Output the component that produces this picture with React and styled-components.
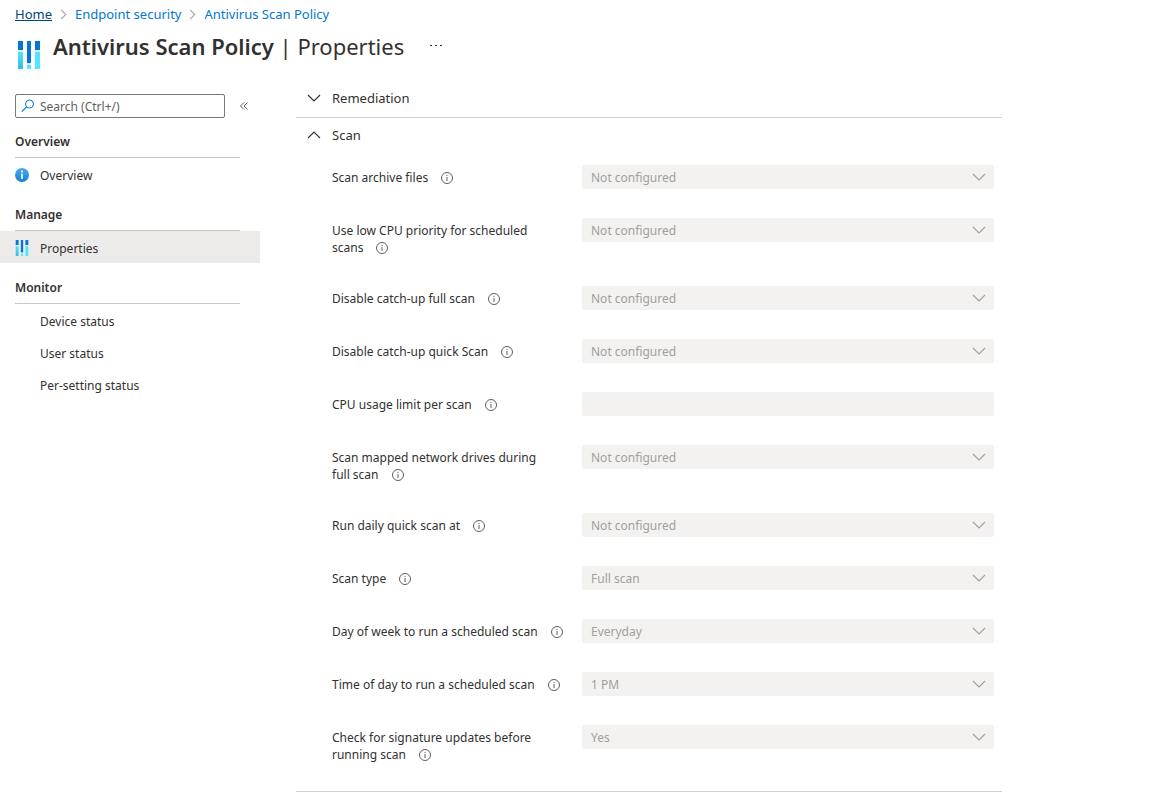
import React, { useState } from "react";
import styled, { createGlobalStyle, css } from "styled-components";

const NOT_CONFIGURED = "Not configured";

const scanSettings = [
  { id: "archive-files", label: "Scan archive files", value: NOT_CONFIGURED },
  {
    id: "low-cpu",
    label: "Use low CPU priority for scheduled scans",
    value: NOT_CONFIGURED,
  },
  {
    id: "catchup-full",
    label: "Disable catch-up full scan",
    value: NOT_CONFIGURED,
  },
  {
    id: "catchup-quick",
    label: "Disable catch-up quick Scan",
    value: NOT_CONFIGURED,
  },
  { id: "cpu-limit", label: "CPU usage limit per scan", type: "text" },
  {
    id: "mapped-drives",
    label: "Scan mapped network drives during full scan",
    value: NOT_CONFIGURED,
  },
  { id: "daily-quick", label: "Run daily quick scan at", value: NOT_CONFIGURED },
  { id: "scan-type", label: "Scan type", value: "Full scan" },
  {
    id: "scan-day",
    label: "Day of week to run a scheduled scan",
    value: "Everyday",
  },
  {
    id: "scan-time",
    label: "Time of day to run a scheduled scan",
    value: "1 PM",
  },
  {
    id: "signature-updates",
    label: "Check for signature updates before running scan",
    value: "Yes",
  },
];

const menu = [
  { title: "Overview", items: [{ name: "Overview", icon: "info" }] },
  {
    title: "Manage",
    items: [{ name: "Properties", icon: "bars", active: true }],
  },
  {
    title: "Monitor",
    items: [
      { name: "Device status" },
      { name: "User status" },
      { name: "Per-setting status" },
    ],
  },
];

const Chevron = ({ up, size = 14 }) => (
  <svg width={size} height={size} viewBox="0 0 14 14" fill="none">
    <path
      d={up ? "M1 10L7 4L13 10" : "M1 4L7 10L13 4"}
      stroke="currentColor"
      strokeWidth="1.1"
    />
  </svg>
);

const BarsIcon = ({ width, height }) => (
  <svg width={width} height={height} viewBox="0 0 24 28">
    <defs>
      <linearGradient id="bars-cyan" x1="0" y1="1" x2="0" y2="0">
        <stop offset="0" stopColor="#32bedd" />
        <stop offset="1" stopColor="#50e6ff" />
      </linearGradient>
    </defs>
    <rect x="1" y="0" width="5" height="9" fill="#0078d4" />
    <rect x="1" y="9" width="5" height="2" fill="#d9eef8" />
    <rect x="1" y="11" width="5" height="17" fill="url(#bars-cyan)" />
    <rect x="10" y="0" width="4" height="22" fill="#0078d4" />
    <rect x="10" y="22" width="4" height="2" fill="#d9eef8" />
    <rect x="10" y="24" width="4" height="4" fill="#50e6ff" />
    <rect x="18" y="0" width="5" height="9" fill="#0078d4" />
    <rect x="18" y="9" width="5" height="2" fill="#d9eef8" />
    <rect x="18" y="11" width="5" height="17" fill="#50e6ff" />
  </svg>
);

const OverviewIcon = () => (
  <svg width="14" height="14" viewBox="0 0 14 14">
    <defs>
      <linearGradient id="info-blue" x1="0" y1="1" x2="0" y2="0">
        <stop offset="0" stopColor="#0f82d8" />
        <stop offset="1" stopColor="#4fa8ec" />
      </linearGradient>
    </defs>
    <circle cx="7" cy="7" r="7" fill="url(#info-blue)" />
    <circle cx="7" cy="3.6" r="1" fill="#fff" />
    <rect x="6.2" y="5.5" width="1.6" height="5.5" fill="#fff" />
  </svg>
);

const SearchIcon = () => (
  <svg width="14" height="14" viewBox="0 0 14 14" fill="none">
    <circle cx="8.5" cy="5" r="4" stroke="#0078d4" />
    <path d="M5.6 7.9L0.8 12.7" stroke="#0078d4" strokeWidth="1.2" />
  </svg>
);

const InfoIcon = () => (
  <svg width="12" height="12" viewBox="0 0 12 12" fill="none">
    <circle cx="6" cy="6" r="5.5" stroke="#605e5c" />
    <rect x="5.5" y="3" width="1" height="1" fill="#605e5c" />
    <rect x="5.5" y="5" width="1" height="4" fill="#605e5c" />
  </svg>
);

const Setting = ({ id, label, value, type }) => (
  <SettingRow>
    <LabelCell>
      <label htmlFor={id}>{label}</label>
      <InfoButton type="button" aria-label={`About ${label}`}>
        <InfoIcon />
      </InfoButton>
    </LabelCell>
    {type === "text" ? (
      <TextInput id={id} type="text" disabled />
    ) : (
      <SelectWrapper>
        <Select id={id} defaultValue={value} disabled>
          <option>{value}</option>
        </Select>
        <Chevron />
      </SelectWrapper>
    )}
  </SettingRow>
);

const App = () => {
  const [open, setOpen] = useState({ remediation: false, scan: true });

  const toggle = (name) => setOpen({ ...open, [name]: !open[name] });

  return (
    <>
      <GlobalStyle />
      <Header>
        <Breadcrumb aria-label="Breadcrumb">
          <HomeLink href="#home">Home</HomeLink>
          <Separator />
          <CrumbLink href="#endpoint-security">Endpoint security</CrumbLink>
          <Separator />
          <CrumbLink href="#policy">Antivirus Scan Policy</CrumbLink>
        </Breadcrumb>
        <TitleRow>
          <BarsIcon width={24} height={28} />
          <Title>
            <strong>Antivirus Scan Policy</strong> | Properties
          </Title>
          <MoreButton type="button" aria-label="More actions">
            <svg width="12" height="4" viewBox="0 0 12 4" fill="#323130">
              <rect x="0" y="1" width="2" height="1" />
              <rect x="5" y="1" width="2" height="1" />
              <rect x="10" y="1" width="2" height="1" />
            </svg>
          </MoreButton>
        </TitleRow>
      </Header>

      <Body>
        <Sidebar>
          <SearchRow>
            <SearchBox>
              <SearchIcon />
              <SearchInput
                type="text"
                placeholder="Search (Ctrl+/)"
                aria-label="Search"
              />
            </SearchBox>
            <CollapseButton type="button" aria-label="Collapse menu">
              <svg width="8" height="8" viewBox="0 0 8 8" fill="none">
                <path
                  d="M4 0.5L0.5 4L4 7.5M7.5 0.5L4 4L7.5 7.5"
                  stroke="#605e5c"
                />
              </svg>
            </CollapseButton>
          </SearchRow>
          {menu.map(({ title, items }) => (
            <MenuSection key={title}>
              <MenuTitle>{title}</MenuTitle>
              {items.map(({ name, icon, active }) => (
                <MenuLink key={name} href={`#${name}`} $active={active}>
                  <MenuIcon>
                    {icon === "info" && <OverviewIcon />}
                    {icon === "bars" && <BarsIcon width={14} height={16} />}
                  </MenuIcon>
                  {name}
                </MenuLink>
              ))}
            </MenuSection>
          ))}
        </Sidebar>

        <Main>
          <Section>
            <SectionButton
              type="button"
              aria-expanded={open.remediation}
              onClick={() => toggle("remediation")}
            >
              <Chevron up={open.remediation} />
              Remediation
            </SectionButton>
          </Section>
          <Section>
            <SectionButton
              type="button"
              aria-expanded={open.scan}
              onClick={() => toggle("scan")}
            >
              <Chevron up={open.scan} />
              Scan
            </SectionButton>
            {open.scan && (
              <Settings>
                {scanSettings.map((setting) => (
                  <Setting key={setting.id} {...setting} />
                ))}
              </Settings>
            )}
          </Section>
        </Main>
      </Body>
    </>
  );
};

export default App;

const GlobalStyle = createGlobalStyle`
  * {
    box-sizing: border-box;
  }

  body {
    margin: 0;
    background: #fff;
    color: #323130;
    font-family: "Segoe UI", "Noto Sans", sans-serif;
    font-size: 12px;
    line-height: 17px;
  }

  button,
  input,
  select {
    font: inherit;
    color: inherit;
  }

  svg {
    flex-shrink: 0;
  }
`;

const plainButton = css`
  display: flex;
  align-items: center;
  padding: 0;
  border: none;
  background: none;
  cursor: pointer;
`;

const Header = styled.header`
  padding: 4px 15px 0;
`;

const Breadcrumb = styled.nav`
  display: flex;
  align-items: center;
  height: 20px;
  font-size: 13px;
`;

const CrumbLink = styled.a`
  color: #0078d4;
  text-decoration: none;
`;

const HomeLink = styled(CrumbLink)`
  color: #004578;
  text-decoration: underline;
`;

const Separator = styled.span`
  width: 7px;
  height: 7px;
  margin: 0 10px 0 6px;
  border: solid #a19f9d;
  border-width: 1px 1px 0 0;
  transform: rotate(45deg);
`;

const TitleRow = styled.div`
  display: flex;
  align-items: center;
  height: 44px;
  padding: 0 2px;

  & > svg {
    margin-top: 18px;
  }
`;

const Title = styled.h1`
  margin: 0 26px 0 12px;
  font-size: 22px;
  font-weight: 400;
  line-height: 32px;

  strong {
    font-weight: 600;
  }
`;

const MoreButton = styled.button`
  ${plainButton}
`;

const Body = styled.div`
  display: flex;
  align-items: flex-start;
  gap: 36px;
  padding-top: 12px;
`;

const Sidebar = styled.aside`
  flex: 0 0 260px;
  padding-top: 14px;
`;

const SearchRow = styled.div`
  display: flex;
  align-items: center;
  gap: 15px;
  padding: 0 12px 0 15px;
`;

const SearchBox = styled.div`
  display: flex;
  align-items: center;
  gap: 5px;
  width: 210px;
  height: 24px;
  padding: 0 5px;
  border: 1px solid #7a7876;
  border-radius: 2px;
`;

const SearchInput = styled.input`
  flex: 1;
  min-width: 0;
  padding: 0;
  border: none;
  outline: none;
  background: none;

  &::placeholder {
    color: #605e5c;
    opacity: 1;
  }
`;

const CollapseButton = styled.button`
  ${plainButton}
`;

const MenuSection = styled.div`
  padding-bottom: 1px;
`;

const MenuTitle = styled.h2`
  height: 40px;
  margin: 0 20px 0 15px;
  padding-top: 15px;
  border-bottom: 1px solid #c8c6c4;
  font-size: 12px;
  font-weight: 600;
`;

const MenuLink = styled.a`
  display: flex;
  align-items: center;
  gap: 11px;
  height: 32px;
  padding: 2px 15px 0;
  background: ${({ $active }) => ($active ? "#edebe9" : "transparent")};
  color: inherit;
  text-decoration: none;
`;

const MenuIcon = styled.span`
  display: flex;
  justify-content: center;
  width: 14px;
`;

const Main = styled.main`
  flex: 1;
  max-width: 706px;
  padding-top: 1px;
`;

const Section = styled.section`
  border-bottom: 1px solid #d2d0ce;
`;

const SectionButton = styled.button`
  ${plainButton}
  gap: 11px;
  width: 100%;
  height: 36px;
  padding: 0 11px 2px;
  font-size: 13px;
  text-align: left;
`;

const Settings = styled.div`
  display: flex;
  flex-direction: column;
  gap: 29px;
  padding: 11px 8px 27px 36px;
`;

const SettingRow = styled.div`
  display: flex;
  align-items: flex-start;
  gap: 38px;
`;

const LabelCell = styled.div`
  flex: 0 0 212px;
  padding: 4px 0 1px;
`;

/* hangs over the column gap so that it never wraps onto its own line */
const InfoButton = styled.button`
  ${plainButton}
  display: inline-flex;
  width: 12px;
  height: 12px;
  margin: 0 -24px 0 13px;
  vertical-align: -2px;
`;

const fieldStyle = css`
  width: 100%;
  height: 24px;
  padding: 0 9px;
  border: none;
  border-radius: 2px;
  background: #f3f2f1;
  color: #a19f9d;
  opacity: 1;
`;

const TextInput = styled.input`
  ${fieldStyle}
  flex: 1;
  min-width: 0;
`;

const SelectWrapper = styled.div`
  display: grid;
  flex: 1;
  align-items: center;
  color: #a19f9d;

  & > * {
    grid-area: 1 / 1;
  }

  & > svg {
    justify-self: end;
    margin-right: 8px;
    pointer-events: none;
  }
`;

const Select = styled.select`
  ${fieldStyle}
  appearance: none;
`;
